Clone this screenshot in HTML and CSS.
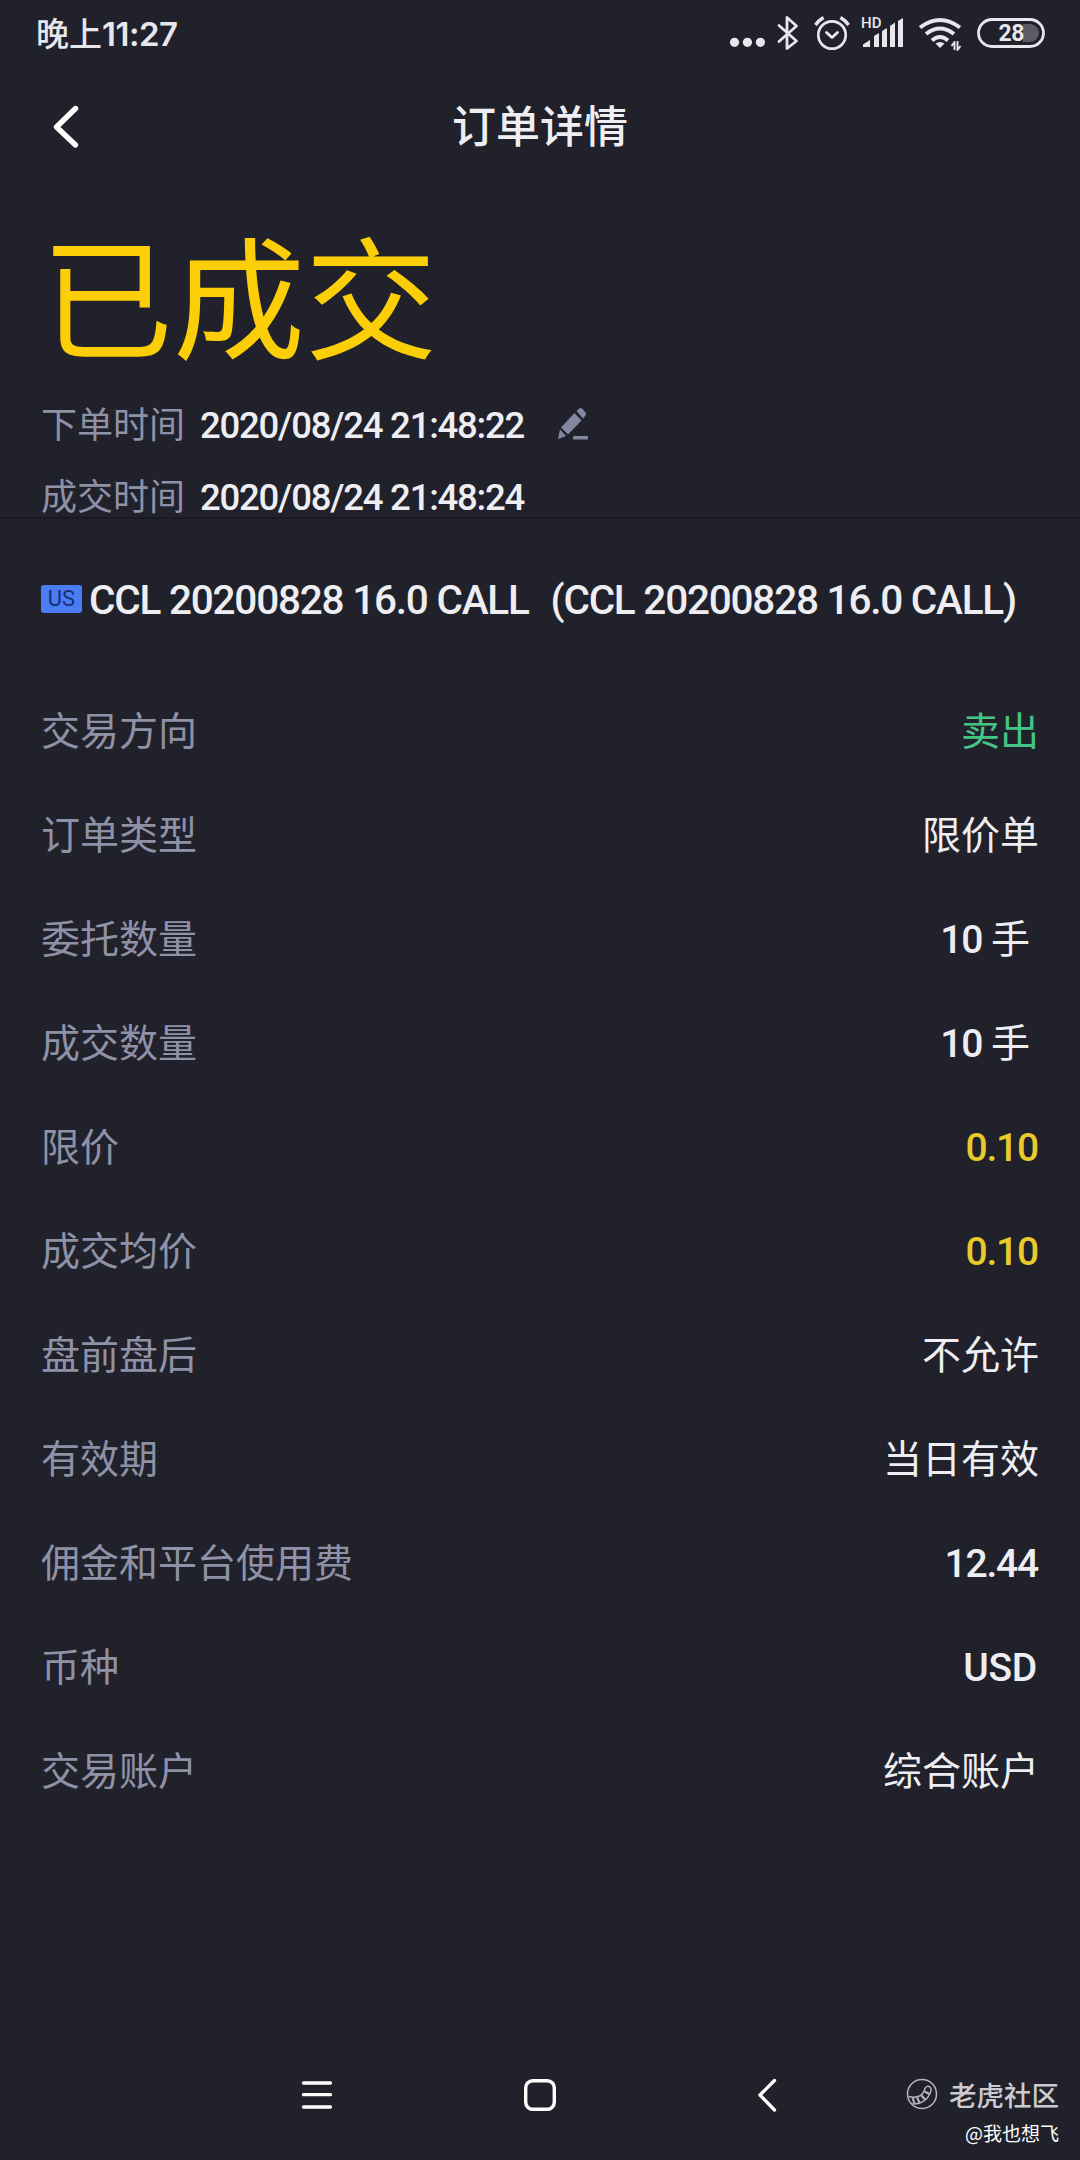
FILE: index.html
```html
<!DOCTYPE html>
<html lang="zh-CN">
<head>
  <meta charset="UTF-8">
  <meta name="viewport" content="width=device-width, initial-scale=1.0">
  <title>订单详情</title>
  <link rel="stylesheet" href="styles.css">
</head>
<body>
  <div class="screen">
    <div class="status-bar">
      <span class="clock">晚上<span class="clock-num">11:27</span></span>
      <svg class="status-icons" width="350" height="64" viewBox="700 0 350 64" fill="none" stroke="#e6e6ec" stroke-linecap="round" stroke-linejoin="round">
        <g fill="#e6e6ec" stroke="none">
          <circle cx="734.5" cy="42.3" r="4.6"/>
          <circle cx="747.4" cy="42.3" r="4.6"/>
          <circle cx="760.4" cy="42.3" r="4.6"/>
        </g>
        <!-- bluetooth -->
        <path stroke-width="2.8" d="M779 25.5 L796.5 41 L787 48.5 V17.5 L796.5 26 L779 41.5"/>
        <!-- alarm -->
        <circle cx="832" cy="35" r="13.7" stroke-width="2.7"/>
        <path stroke-width="3" d="M826.5 32.5 L832 37.5 L837.5 32.5"/>
        <path stroke-width="3.4" stroke-linecap="butt" d="M815.5 25 Q818.5 20.5 823.5 17.5 M840.5 17.5 Q845.5 20.5 848.5 25"/>
        <!-- signal -->
        <g fill="#e6e6ec" stroke="none">
          <path d="M863 47 V44.5 L870 40 V47 Z M874 47 V36 L879 33 V47 Z M882 47 V31 L887 28 V47 Z M890 47 V26 L895 22.5 V47 Z M898 47 V21 L903 18 V47 Z"/>
          <text class="hd" x="861" y="28">HD</text>
        </g>
        <!-- wifi -->
        <g stroke-width="4" stroke-linecap="butt">
          <path d="M920 27.5 Q940 12.5 960 27.5"/>
          <path d="M926 34 Q940 23 954 34"/>
          <path d="M932 40.5 Q940 33.5 948 40.5"/>
        </g>
        <path fill="#e6e6ec" stroke="none" d="M935.5 43.5 Q940 40.5 944.5 43.5 L940 48 Z"/>
        <path stroke-width="1.9" stroke-linecap="butt" d="M951.5 46 L954.5 42 V50 M957.5 41 V50 L960.5 46"/>
        <!-- battery -->
        <path fill="#5a5b63" stroke="none" d="M1023 24 H1030 A9 9 0 0 1 1030 42 H1023 Z"/>
        <rect x="978.5" y="19.5" width="65" height="27" rx="13.5" stroke-width="2.8"/>
        <text class="battery" x="998.5" y="41.3">28</text>
      </svg>
    </div>

    <header class="nav">
      <svg class="back" width="32" height="48" viewBox="0 0 32 48" fill="none" stroke="#fff" stroke-width="5.4" stroke-linecap="round" stroke-linejoin="round">
        <path d="M26.5 5.5 L7.5 24 L26.5 42"/>
      </svg>
      <h1>订单详情</h1>
    </header>

    <section class="summary">
      <div class="state">已成交</div>
      <div class="time-row">
        <span class="label">下单时间</span>
        <span class="time num">2020/08/24 21:48:22</span>
        <svg class="edit" width="32" height="34" viewBox="0 0 32 34" fill="#8587a2">
          <path d="M19.5 4 L22.5 1.5 Q24 .5 25.5 2 L28.5 5.5 Q29.5 7 28.5 8.5 L26 11.5 Z"/>
          <path d="M17.5 6 L24.5 13.5 L11 27.5 L4 20.5 Z"/>
          <path d="M3 22.5 L9 29 L1 32 Z"/>
          <rect x="16" y="29" width="15" height="3.6" rx="1"/>
        </svg>
      </div>
      <div class="time-row">
        <span class="label">成交时间</span>
        <span class="time num">2020/08/24 21:48:24</span>
      </div>
    </section>

    <section class="symbol">
      <span class="market">US</span>
      <span class="symbol-name num">CCL 20200828 16.0 CALL</span>
      <span class="symbol-full num">(CCL 20200828 16.0 CALL)</span>
    </section>

    <section class="details">
      <div class="row"><span class="label">交易方向</span><span class="value sell">卖出</span></div>
      <div class="row"><span class="label">订单类型</span><span class="value">限价单</span></div>
      <div class="row"><span class="label">委托数量</span><span class="value lots"><span class="num">10</span> 手</span></div>
      <div class="row"><span class="label">成交数量</span><span class="value lots"><span class="num">10</span> 手</span></div>
      <div class="row"><span class="label">限价</span><span class="value price num">0.10</span></div>
      <div class="row"><span class="label">成交均价</span><span class="value price num">0.10</span></div>
      <div class="row"><span class="label">盘前盘后</span><span class="value">不允许</span></div>
      <div class="row"><span class="label">有效期</span><span class="value">当日有效</span></div>
      <div class="row"><span class="label">佣金和平台使用费</span><span class="value num">12.44</span></div>
      <div class="row"><span class="label">币种</span><span class="value num currency">USD</span></div>
      <div class="row"><span class="label">交易账户</span><span class="value">综合账户</span></div>
    </section>

    <footer class="bottom">
      <div class="system-keys">
        <svg width="32" height="36" viewBox="0 0 32 36" stroke="#fff" stroke-width="3.3" stroke-linecap="round">
          <path d="M2.5 6 H29.5 M2.5 17.7 H29.5 M2.5 30 H29.5"/>
        </svg>
        <svg width="36" height="36" viewBox="0 0 36 36" fill="none" stroke="#fff" stroke-width="3.4">
          <rect x="3.7" y="3.7" width="28.6" height="28.6" rx="7"/>
        </svg>
        <svg width="31" height="36" viewBox="-9 0 31 36" fill="none" stroke="#fff" stroke-width="3.3" stroke-linecap="round" stroke-linejoin="round">
          <path d="M18.5 3.5 L4 18 L18.5 33"/>
        </svg>
      </div>
      <div class="watermark">
        <div class="brand">
          <svg width="32" height="32" viewBox="0 0 32 32" fill="none" stroke="#b4b4bb">
            <circle cx="16" cy="16" r="14.5" stroke-width="1.5"/>
            <path stroke-width="1.5" d="M2.5 18.5 Q9 20 13.5 18 Q17.5 16 19 10.5 Q21 7 24 9 Q26 11 24 15.5 Q20 25 9 26 Q6 26 4.5 25"/>
            <path stroke-width="2.2" d="M6.5 19.5 L8.5 25.5 M11 19.5 L13.5 24.5 M15.5 17.5 L19 21.5 M18.5 13.5 L23.5 16"/>
          </svg>
          <span>老虎社区</span>
        </div>
        <div class="author">@我也想飞</div>
      </div>
    </footer>
  </div>
</body>
</html>
```
FILE: styles.css
```css
* {
  box-sizing: border-box;
}
body {
  margin: 0;
  background-color: #21212b;
  color: #eeeef2;
  font-family: "Noto Sans CJK SC", sans-serif;
}
svg {
  display: block;
  flex: none;
}
.screen {
  width: 1080px;
  height: 2160px;
  display: flex;
  flex-direction: column;
  overflow: hidden;
  white-space: nowrap;
}
.num {
  font-family: Roboto, "Noto Sans CJK SC", sans-serif;
  font-weight: 500;
  letter-spacing: -1.22px;
}

/* status bar */
.status-bar {
  height: 64px;
  padding: 0 30px 0 36px;
  display: flex;
  justify-content: space-between;
  align-items: center;
}
.clock {
  display: flex;
  align-items: baseline;
  font-size: 33px;
  font-weight: 500;
  color: #e6e6ec;
}
.clock-num {
  font-family: Inter, sans-serif;
  font-weight: 600;
  font-size: 33px;
  letter-spacing: -0.5px;
}
.hd {
  font: 500 15px Roboto, sans-serif;
}
.battery {
  font: 700 23px Roboto, sans-serif;
  letter-spacing: -0.5px;
  fill: #e6e6ec;
  stroke: none;
}

/* title bar */
.nav {
  height: 126px;
  padding: 0 49px;
  display: grid;
  grid-template-columns: 32px 1fr 32px;
  align-items: center;
}
.nav h1 {
  margin: 0;
  padding-bottom: 6px;
  text-align: center;
  font-size: 44px;
  line-height: 60px;
  font-weight: 500;
}

/* order state */
.summary {
  height: 329px;
  padding: 27px 41px 0;
  border-bottom: 2px solid #191921;
}
.state {
  height: 171px;
  font-size: 132px;
  line-height: 150px;
  color: #fbce07;
}
.label {
  padding-bottom: 7px;
  color: #8f91a6;
}
.time-row {
  height: 72px;
  display: flex;
  align-items: center;
  font-size: 36px;
}
.time-row .label {
  padding-bottom: 5px;
}
.time {
  margin-left: 15px;
  padding-top: 2px;
  font-size: 36.5px;
}
.edit {
  margin-left: 33px;
}

/* contract */
.symbol {
  height: 160px;
  padding: 0 41px;
  display: flex;
  align-items: center;
  font-size: 40.5px;
}
.symbol .num {
  padding-top: 2px;
}
.market {
  flex: none;
  width: 41px;
  height: 28px;
  margin-right: 7px;
  border-radius: 3px;
  background-color: #4a7cf6;
  color: #17306e;
  font: 400 22px/28px Roboto, sans-serif;
  text-align: center;
}
.symbol-full {
  margin-left: 22px;
}

/* detail rows */
.row {
  height: 104px;
  padding: 0 41px;
  display: flex;
  justify-content: space-between;
  align-items: center;
  font-size: 39px;
}
.value {
  padding-bottom: 7px;
}
.value.num {
  padding: 2px 1px 0 0;
}
.value.currency {
  padding-right: 2px;
  letter-spacing: -0.3px;
}
.value.lots {
  padding-right: 9px;
}
.sell {
  color: #45c585;
}
.price {
  color: #e8ca2c;
}

/* system keys and watermark */
.bottom {
  margin-top: auto;
  height: 130px;
  padding: 46px 21px 0 301px;
  display: flex;
  justify-content: space-between;
}
.system-keys {
  width: 477px;
  padding-top: 1px;
  display: flex;
  justify-content: space-between;
}
.brand {
  display: flex;
  align-items: center;
  gap: 11px;
  height: 36px;
  color: #cbcbd1;
  font-size: 27.5px;
  font-weight: 500;
}
.author {
  margin-top: 6px;
  font-size: 19px;
  line-height: 30px;
  color: #fff;
  text-align: right;
}
```
